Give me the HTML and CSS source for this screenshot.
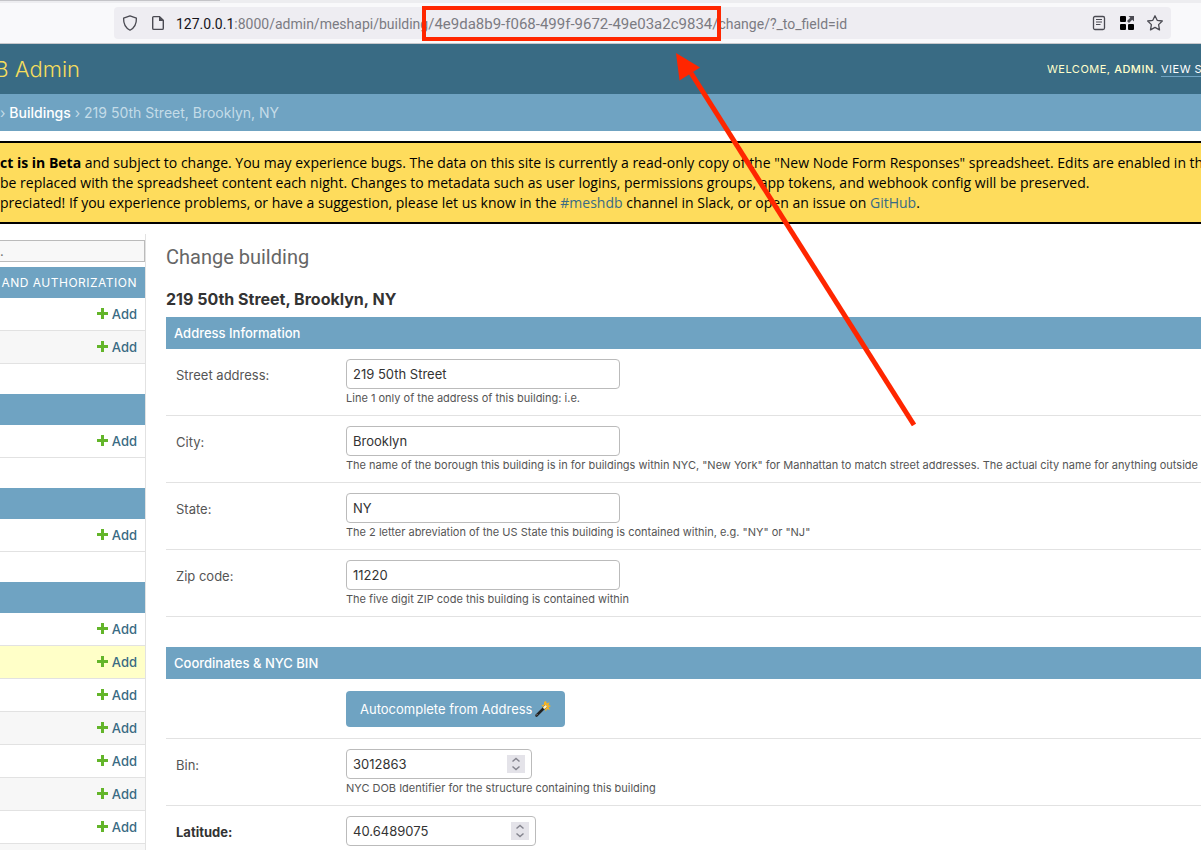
FILE: index.html
```html
<!DOCTYPE html>
<html lang="en">
<head>
<meta charset="utf-8">
<title>Change building</title>
<link rel="stylesheet" href="styles.css">
</head>
<body>
<div class="tabstrip"><div class="tab-edge"></div></div>
<div class="toolbar">
  <div class="urlbar">
    <svg class="icon" viewBox="0 0 16 16"><path d="M8 .9 14.4 3.2C14.6 8.500 12.500 12.800 8 15.200 3.500 12.800 1.400 8.500 1.600 3.200Z" fill="none" stroke="#4a4a52" stroke-width="1.300" stroke-linejoin="round"/></svg>
    <svg class="icon icon-page" viewBox="0 0 16 16"><path d="M3.700 1.600H9.500L13.300 5.400V13.200Q13.300 14.400 12.100 14.400H3.900Q2.700 14.400 2.700 13.200V2.600Q2.700 1.600 3.700 1.600Z" fill="none" stroke="#4a4a52" stroke-width="1.400"/><path d="M9 1.500V6H13.500Z" fill="#4a4a52"/></svg>
    <div class="url"><span class="host">127.0.0.1</span>:8000/admin/meshapi/building<span class="uuid">/4e9da8b9-f068-499f-9672-49e03a2c9834/</span>change/?_to_field=id</div>
    <div class="url-actions">
      <svg class="icon" viewBox="0 0 16 16"><rect x="2.500" y="1.500" width="11" height="13" rx="1.500" fill="none" stroke="#4a4a52" stroke-width="1.300"/><path d="M5 4.500H11M5 7H11M5 9.500H9.500" stroke="#4a4a52" stroke-width="1.200"/></svg>
      <svg class="icon" viewBox="0 0 16 16"><g fill="#000"><rect x="1" y="1" width="6" height="6" rx="1"/><rect x="1" y="9" width="6" height="6" rx="1"/><rect x="9" y="9" width="6" height="6" rx="1"/></g><path d="M9.500 1H15V6.500L13.200 4.700 10 8 8 6 11.300 2.800Z" fill="#4a4a52"/></svg>
      <svg class="icon" viewBox="0 0 16 16"><path d="M8 .8 10.200 5.300 15.300 6 11.600 9.600 12.500 14.900 8 12.400 3.500 14.900 4.400 9.600 .7 6 5.800 5.300Z" fill="none" stroke="#4a4a52" stroke-width="1.300" stroke-linejoin="round"/></svg>
    </div>
  </div>
</div>

<header class="header">
  <div class="brand">B Admin</div>
  <div class="user-tools">WELCOME, <strong>ADMIN</strong>. <a href="#">VIEW SITE</a></div>
</header>
<nav class="breadcrumbs">› <a href="#">Buildings</a> › 219 50th Street, Brooklyn, NY</nav>

<div class="banner">
  <p><strong>ct is in Beta</strong> and subject to change. You may experience bugs. The data on this site is currently a read-only copy of the "New Node Form Responses" spreadsheet. Edits are enabled in the</p>
  <p>be replaced with the spreadsheet content each night. Changes to metadata such as user logins, permissions groups, app tokens, and webhook config will be preserved.</p>
  <p>preciated! If you experience problems, or have a suggestion, please let us know in the <a href="#">#meshdb</a> channel in Slack, or open an issue on <a href="#">GitHub</a>.</p>
</div>

<div class="layout">
  <aside class="sidebar">
    <input class="filter" type="search" placeholder="." aria-label="Filter navigation items">
    <table class="module"><caption>AND AUTHORIZATION</caption>
      <tr><td><a class="add" href="#">Add</a></td></tr>
      <tr><td><a class="add" href="#">Add</a></td></tr>
    </table>
    <table class="module"><caption></caption>
      <tr><td><a class="add" href="#">Add</a></td></tr>
    </table>
    <table class="module"><caption></caption>
      <tr><td><a class="add" href="#">Add</a></td></tr>
    </table>
    <table class="module"><caption></caption>
      <tr><td><a class="add" href="#">Add</a></td></tr>
      <tr class="current"><td><a class="add" href="#">Add</a></td></tr>
      <tr><td><a class="add" href="#">Add</a></td></tr>
      <tr><td><a class="add" href="#">Add</a></td></tr>
      <tr><td><a class="add" href="#">Add</a></td></tr>
      <tr><td><a class="add" href="#">Add</a></td></tr>
      <tr><td><a class="add" href="#">Add</a></td></tr>
      <tr><td></td></tr>
    </table>
  </aside>

  <main class="content">
    <h1>Change building</h1>
    <h2>219 50th Street, Brooklyn, NY</h2>
    <section class="fieldset">
      <h3>Address Information</h3>
      <div class="row"><label for="street">Street address:</label><div class="field"><input class="text" id="street" type="text" value="219 50th Street"><p class="help">Line 1 only of the address of this building: i.e.</p></div></div>
      <div class="row"><label for="city">City:</label><div class="field"><input class="text" id="city" type="text" value="Brooklyn"><p class="help">The name of the borough this building is in for buildings within NYC, "New York" for Manhattan to match street addresses. The actual city name for anything outside</p></div></div>
      <div class="row"><label for="state">State:</label><div class="field"><input class="text" id="state" type="text" value="NY"><p class="help">The 2 letter abreviation of the US State this building is contained within, e.g. "NY" or "NJ"</p></div></div>
      <div class="row"><label for="zip">Zip code:</label><div class="field"><input class="text" id="zip" type="text" value="11220"><p class="help">The five digit ZIP code this building is contained within</p></div></div>
    </section>
    <section class="fieldset">
      <h3>Coordinates &amp; NYC BIN</h3>
      <div class="row row-action"><div class="field"><button class="autocomplete" type="button">Autocomplete from Address
        <svg class="wand" viewBox="0 0 16 16"><path d="M11 0 11.800 2.600 14.600 1.200 13.500 4 16 5 13.600 6.300 14.800 9 12 8 10.800 10.500 9.700 7.800 7 8.300 8.200 6 6.300 4 9 3.700 9 1Z" fill="#f5b324"/><path d="M1.500 14.500 10.500 5.500" stroke="#222" stroke-width="2.600" stroke-linecap="round"/><path d="M9.300 6.700 10.700 5.300" stroke="#fff3c4" stroke-width="2.400" stroke-linecap="round"/><path d="M1.300 14.300 2.300 13.300" stroke="#bbb" stroke-width="1"/></svg></button></div></div>
      <div class="row"><label for="bin">Bin:</label><div class="field"><div class="number"><input id="bin" type="number" value="3012863"><svg class="spin" viewBox="0 0 18 18"><path d="M5.500 6.500 9 3.500 12.500 6.500M5.500 11.500 9 14.500 12.500 11.500" fill="none" stroke="#85858f" stroke-width="1.500"/></svg></div><p class="help">NYC DOB Identifier for the structure containing this building</p></div></div>
      <div class="row"><label class="required" for="lat">Latitude:</label><div class="field"><div class="number number-wide"><input id="lat" type="number" step="any" value="40.6489075"><svg class="spin" viewBox="0 0 18 18"><path d="M5.500 6.500 9 3.500 12.500 6.500M5.500 11.500 9 14.500 12.500 11.500" fill="none" stroke="#85858f" stroke-width="1.500"/></svg></div></div></div>
    </section>
  </main>
</div>

<svg class="arrow" width="240" height="376" viewBox="0 0 240 376"><path d="M15 21 238 373" stroke="#ff2600" stroke-width="5"/><path d="M0 1 24 15.500 3.500 28.500Z" fill="#ff2600"/></svg>
</body>
</html>
```
FILE: styles.css
```css
* { box-sizing: border-box; }
html { height: 100%; overflow: hidden; }
body {
  position: relative;
  margin: 0;
  height: 100%;
  overflow: hidden;
  background: #fff;
  color: #333;
  font: 13px/18px Inter, "Liberation Sans", sans-serif;
}
p, h1, h2, h3 { margin: 0; }
a { text-decoration: none; }
input, button { font: inherit; color: inherit; margin: 0; }

.tabstrip { height: 3px; background: #ededf0; }
.tab-edge { width: 220px; height: 1px; background: #c4c4c8; }
.toolbar {
  padding: 4px 30px 4px 114px;
  background: #f9f9fb;
  border-bottom: 1px solid #c8c8cc;
}
.urlbar {
  display: flex;
  align-items: center;
  height: 32px;
  padding: 0 8px;
  border-radius: 4px;
  background: #eeedf2;
}
.icon { flex: none; width: 16px; height: 16px; }
.icon-page { margin-left: 12px; }
.url {
  flex: 1;
  margin-left: 10px;
  padding-top: 2px;
  font-family: Roboto, Inter, sans-serif;
  font-size: 14px;
  color: #7b7b82;
  white-space: nowrap;
}
.host { color: #15141a; }
.uuid { position: relative; font-size: 15px; }
.uuid::after {
  content: "";
  position: absolute;
  inset: -9px -3px -8px -6px;
  border: 4px solid #ff2600;
}
.url-actions { display: flex; gap: 12px; }

.header {
  display: flex;
  align-items: center;
  justify-content: space-between;
  height: 50px;
  background: #396b84;
}
.brand {
  display: flex;
  justify-content: flex-end;
  width: 80px;
  overflow: hidden;
  color: #f5dd5d;
  font-size: 22px;
  line-height: 30px;
  font-weight: 300;
  white-space: nowrap;
}
.user-tools {
  width: 154px;
  color: #ffffcc;
  font-size: 11px;
  letter-spacing: 0.5px;
  white-space: nowrap;
}
.user-tools strong { font-weight: 500; }
.user-tools a { color: #fff; border-bottom: 1px solid #6fa3c2; }
.breadcrumbs {
  height: 37px;
  line-height: 37px;
  overflow: hidden;
  background: #6fa3c2;
  color: #c4dce8;
  font-size: 14px;
  white-space: nowrap;
}
.breadcrumbs a { color: #fff; font-weight: 500; }

.banner {
  margin: 10px 0;
  padding: 10px 0 9px;
  border: solid #000;
  border-width: 2px 0;
  background: #fedc5c;
  color: #000;
  font-family: "Open Sans", Inter, sans-serif;
  font-size: 14px;
  line-height: 20px;
  white-space: nowrap;
}
.banner a { color: #396b84; font-weight: 500; }

.layout { display: flex; }
.sidebar {
  flex: none;
  width: 146px;
  padding-top: 6px;
  border-right: 1px solid #e2e2e2;
}
.filter {
  display: block;
  width: 100%;
  height: 22px;
  margin-bottom: 5px;
  padding: 0;
  border: 1px solid #bbb;
  border-left: 0;
  border-radius: 0;
  background: #f8f8f8;
}
.module { width: 100%; margin-bottom: 30px; border-collapse: separate; border-spacing: 0; }
.module caption {
  height: 31px;
  padding-right: 8px;
  line-height: 31px;
  background: #6fa3c2;
  color: #fff;
  font-size: 12px;
  letter-spacing: 0.5px;
  text-align: right;
  white-space: nowrap;
}
.module td { height: 33px; padding: 0 8px 0 0; border-bottom: 1px solid #e2e2e2; text-align: right; }
.module tr:nth-child(even) { background: #f7f7f7; }
.module tr.current { background: #ffffc8; }
.add { color: #396b84; font-weight: 500; }
.add::before {
  content: "";
  display: inline-block;
  width: 11px;
  height: 11px;
  margin-right: 4px;
  background: linear-gradient(#63b52a, #63b52a) center / 11px 3px no-repeat,
              linear-gradient(#63b52a, #63b52a) center / 3px 11px no-repeat;
}

.content { flex: 1; min-width: 0; padding: 11px 0 0 20px; }
h1 {
  margin-bottom: 20px;
  font-family: Roboto, Inter, sans-serif;
  font-size: 20px;
  line-height: 24px;
  font-weight: 400;
  color: #666;
}
h2 { margin-bottom: 8px; font-size: 16px; line-height: 20px; font-weight: 700; }
.fieldset { margin-bottom: 30px; }
h3 {
  padding: 0 8px;
  background: #6fa3c2;
  color: #fff;
  font-size: 13px;
  line-height: 32px;
  font-weight: 500;
}
.row { display: flex; padding: 10px 0 9px 10px; border-bottom: 1px solid #e2e2e2; }
.row label { width: 170px; padding-top: 7px; color: #555; }
.row label.required { color: #333; font-weight: 700; }
.field { flex: 1; min-width: 0; }
.text {
  display: block;
  width: 274px;
  height: 30px;
  padding: 0 6px;
  border: 1px solid #bbb;
  border-radius: 4px;
  background: #fff;
}
.help { padding-top: 1px; font-size: 11px; line-height: 16px; color: #555; white-space: nowrap; }
.row-action { padding: 12px 0 11px 180px; }
.autocomplete {
  display: flex;
  align-items: center;
  gap: 3px;
  height: 36px;
  padding: 0 14px;
  border: 0;
  border-radius: 4px;
  background: #6fa3c2;
  color: #fff;
}
.wand { width: 16px; height: 16px; }
.number {
  display: flex;
  align-items: center;
  width: 186px;
  height: 30px;
  padding: 0 6px;
  border: 1px solid #bbb;
  border-radius: 4px;
}
.number-wide { width: 190px; }
.number input {
  flex: 1;
  min-width: 0;
  padding: 0;
  border: 0;
  background: none;
  appearance: textfield;
}
.number input::-webkit-inner-spin-button { appearance: none; margin: 0; }
.spin { flex: none; width: 18px; height: 18px; background: #e4e3e9; }

.arrow { position: absolute; left: 676px; top: 52px; }
```
